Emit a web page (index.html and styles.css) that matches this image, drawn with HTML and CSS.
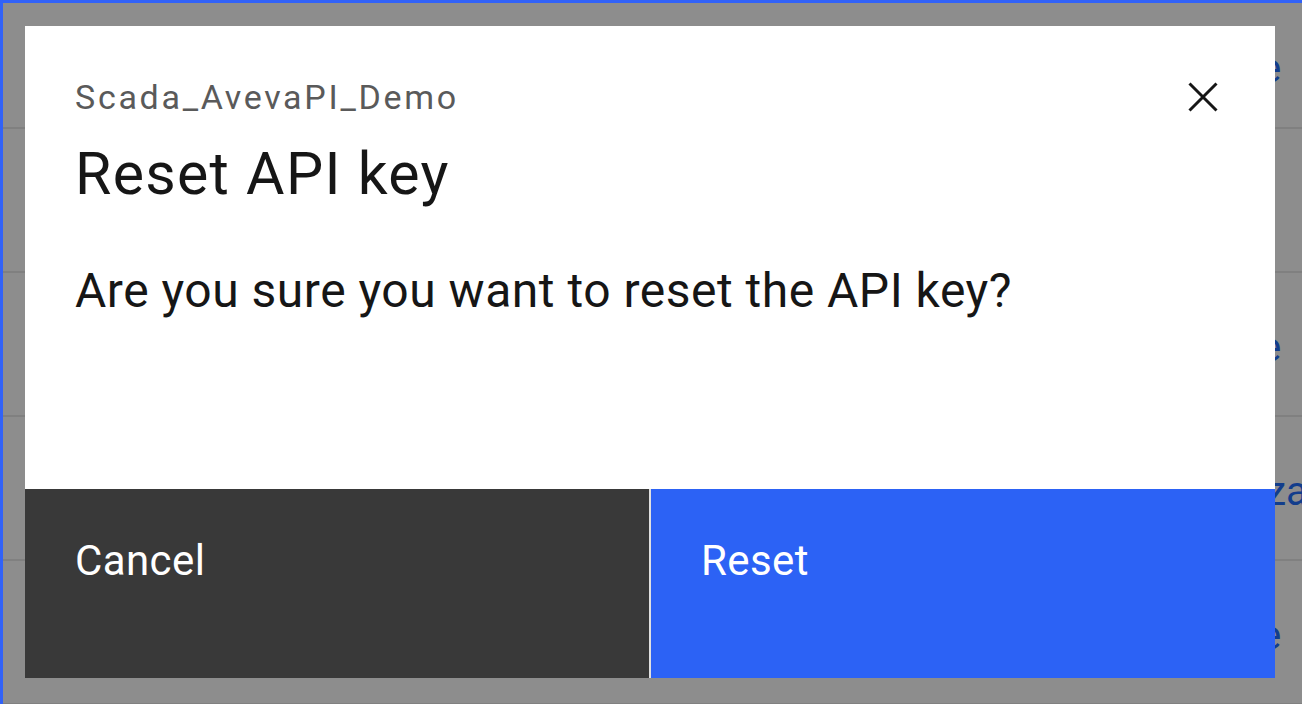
FILE: index.html
```html
<!DOCTYPE html>
<html lang="en">
<head>
<meta charset="utf-8">
<title>Reset API key</title>
<link rel="stylesheet" href="styles.css">
</head>
<body>
<div class="screen">
  <div class="table">
    <div class="row row-head"><span class="cell">Manage</span></div>
    <div class="row"><span class="cell"></span></div>
    <div class="row"><span class="cell">Manage</span></div>
    <div class="row"><span class="cell">Authorization</span></div>
    <div class="row"><span class="cell">Manage</span></div>
  </div>
  <div class="overlay">
    <div class="modal" role="dialog" aria-labelledby="modal-title">
      <div class="modal-header">
        <p class="modal-label">Scada_AvevaPI_Demo</p>
        <h2 class="modal-title" id="modal-title">Reset API key</h2>
        <button class="modal-close" aria-label="Close">
          <svg viewBox="0 0 30 30" width="30" height="30" aria-hidden="true">
            <path d="M1.5 1.5 L28.5 28.5 M28.5 1.5 L1.5 28.5" stroke="#161616" stroke-width="3" fill="none"/>
          </svg>
        </button>
      </div>
      <div class="modal-body">
        <p>Are you sure you want to reset the API key?</p>
      </div>
      <div class="modal-footer">
        <button class="btn btn-secondary">Cancel</button>
        <button class="btn btn-primary">Reset</button>
      </div>
    </div>
  </div>
</div>
</body>
</html>
```
FILE: styles.css
```css
html, body {
  margin: 0;
  padding: 0;
}
body {
  width: 1302px;
  height: 704px;
  overflow: hidden;
  font-family: Roboto, "Liberation Sans", sans-serif;
  background: #ffffff;
}
.screen {
  position: relative;
  width: 1302px;
  height: 704px;
  box-sizing: border-box;
  border-top: 3px solid #3162f8;
  border-left: 3px solid #3162f8;
  overflow: hidden;
  background: #ffffff;
}
.table {
  display: flex;
  flex-direction: column;
}
.row {
  height: 142px;
  border-bottom: 2px solid #e6e6e6;
  display: grid;
  grid-template-columns: 1fr 165px;
  align-items: center;
}
.row-head {
  height: 124px;
}
.cell {
  grid-column: 2;
  font-size: 40px;
  color: #0f62fe;
  white-space: nowrap;
  padding-top: 6px;
}
.overlay {
  position: absolute;
  inset: 0;
  background: rgba(22, 22, 22, 0.49);
  display: flex;
  padding: 23px 27px 26px 22px;
}
.modal {
  position: relative;
  flex: 1;
  background: #ffffff;
  display: flex;
  flex-direction: column;
}
.modal-header {
  padding: 53px 50px 0 50px;
}
.modal-label {
  margin: 0;
  font-size: 34px;
  line-height: 36px;
  letter-spacing: 2.7px;
  color: #5a5a5a;
}
.modal-title {
  margin: 29px 0 0 0;
  font-size: 59px;
  line-height: 60px;
  letter-spacing: 1.3px;
  font-weight: 400;
  color: #161616;
}
.modal-close {
  position: absolute;
  top: 0;
  right: 0;
  width: 144px;
  height: 144px;
  border: 0;
  padding: 0;
  background: transparent;
  display: flex;
  align-items: center;
  justify-content: center;
}
.modal-close svg {
  display: block;
  margin: -2px 0 0 0;
}
.modal-body {
  flex: 1;
  padding: 63px 50px 0 50px;
}
.modal-body p {
  margin: 0;
  font-size: 48px;
  line-height: 48px;
  letter-spacing: 0.5px;
  color: #161616;
}
.modal-footer {
  height: 189px;
  display: flex;
  gap: 2px;
  background: #e0e0e0;
}
.btn {
  flex: 1;
  border: 0;
  margin: 0;
  text-align: left;
  font-family: inherit;
  font-size: 42px;
  line-height: 42px;
  letter-spacing: 0.4px;
  padding: 51px 50px 0 50px;
  display: flex;
  align-items: flex-start;
  color: #ffffff;
}
.btn-secondary {
  background: #393939;
}
.btn-primary {
  background: #2c62f5;
}
```
